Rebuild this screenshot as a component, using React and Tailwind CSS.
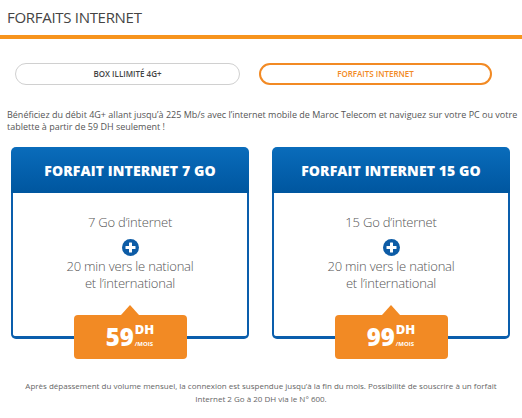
import React from "react";

function Plus() {
  return (
    <svg width="17" height="17" viewBox="0 0 17 17">
      <circle cx="8.5" cy="8.5" r="8.5" fill="#0d5ca6" />
      <rect x="7" y="3.5" width="3" height="10" rx="0.5" fill="#fff" />
      <rect x="3.5" y="7" width="10" height="3" rx="0.5" fill="#fff" />
    </svg>
  );
}

function Card({ title, data, price }) {
  return (
    <div className="w-[238px] flex flex-col">
      <div className="h-[46px] rounded-t-[5px] bg-gradient-to-b from-[#0a6cbb] to-[#00569f] flex items-center justify-center text-white text-[14px] font-extrabold tracking-[0.1px]">
        {title}
      </div>
      <div className="h-[146px] border-x-2 border-b-[3px] border-[#0a5eac] rounded-b-[5px] flex flex-col items-center">
        <div className="mt-[21px] text-[13px] leading-[17px] text-[#555] font-light tracking-[-0.2px]">{data}</div>
        <div className="mt-[8px] h-[17px]"><Plus /></div>
        <div className="mt-[2px] text-[13px] leading-[17px] text-[#555] font-light text-center tracking-[-0.2px]">
          20 min vers le national
          <br />
          et l’international
        </div>
        <div className="mt-[13px] mb-[-25px] flex flex-col items-center relative">
          <div className="w-0 h-0 border-x-[9px] border-x-transparent border-b-[10px] border-b-[#f28a24]" />
          <div className="w-[113px] h-[44px] rounded-[4px] bg-[#f28a24] flex items-center justify-center text-white">
            <span className="text-[24px] font-extrabold leading-[24px]">{price}</span>
            <span className="flex flex-col items-start ml-[1px] -mt-[5px]">
              <span className="block text-[13px] font-extrabold leading-normal">DH</span>
              <span className="block text-[6px] font-bold leading-normal">/MOIS</span>
            </span>
          </div>
        </div>
      </div>
    </div>
  );
}

export default function App() {
  return (
    <div className="w-[522px] h-[418px] bg-white overflow-hidden font-['Open_Sans',sans-serif]">
      <div className="h-[35px] px-[7px] flex items-center text-[15px] text-[#444] tracking-[-0.3px]">
        FORFAITS INTERNET
      </div>
      <div className="h-[4px] bg-[#f7941d]" />
      <div className="mt-[24px] flex">
        <div className="ml-[15px] w-[225px] h-[22px] rounded-full border border-[#d0d0d0] flex items-center justify-center text-[8px] font-semibold text-[#444]">
          BOX ILLIMITÉ 4G+
        </div>
        <div className="ml-[19px] w-[233px] h-[22px] rounded-full border-2 border-[#f28a24] flex items-center justify-center text-[8px] font-semibold text-[#f28a24]">
          FORFAITS INTERNET
        </div>
      </div>
      <p className="mt-[24px] px-[7px] text-[9px] leading-[12px] text-[#555] whitespace-nowrap">
        Bénéficiez du débit 4G+ allant jusqu’à 225 Mb/s avec l’internet mobile de Maroc Telecom et naviguez sur votre PC ou votre
        <br />
        tablette à partir de 59 DH seulement !
      </p>
      <div className="mt-[14px] flex gap-[23px] pl-[11px]">
        <Card title="FORFAIT INTERNET 7 GO" data="7 Go d’internet" price="59" />
        <Card title="FORFAIT INTERNET 15 GO" data="15 Go d’internet" price="99" />
      </div>
      <p className="mt-[40px] text-center text-[8px] leading-[13px] text-[#666]">
        Après dépassement du volume mensuel, la connexion est suspendue jusqu’à la fin du mois. Possibilité de souscrire à un forfait
        <br />
        Internet 2 Go à 20 DH via le N° 600.
      </p>
    </div>
  );
}
